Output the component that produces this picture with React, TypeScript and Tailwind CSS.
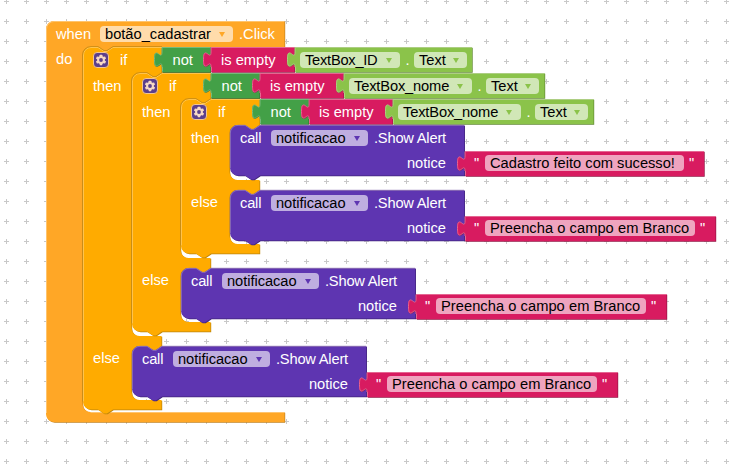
import React from "react";

const NOTCH = "l 6,4 3,0 6,-4";
const TAB = "l -6,4 -3,0 -6,-4";
const INNER = `${TAB} h -7 a 8,8 0 0,0 -8,8`;

type ShapeProps = { d: string; fill: string; dark: string; light: string; edge?: string };

function Shape({ d, fill, dark, light, edge }: ShapeProps) {
  return (
    <svg className="absolute top-0 left-0 overflow-visible" width="1" height="1" aria-hidden="true">
      <path d={d} fill={dark} transform="translate(.7 .7)" />
      <path d={d} fill={fill} />
      {edge && <path d={edge} fill="none" stroke={light} strokeWidth="1" />}
    </svg>
  );
}

function Caret({ className }: { className: string }) {
  return (
    <svg viewBox="0 0 6 5" className={`h-[5px] w-[6px] shrink-0 ${className}`}>
      <path d="M0 0h6L3 5z" fill="currentColor" />
    </svg>
  );
}

function Label({ children, className = "" }: { children: React.ReactNode; className?: string }) {
  return <span className={`block shrink-0 leading-4 whitespace-pre text-white ${className}`}>{children}</span>;
}

function Field({ text, className, textClass, caret }: { text: string; className: string; textClass: string; caret?: string }) {
  return (
    <span className={`flex h-4 shrink-0 items-center rounded-[4px] pl-[5px] leading-4 text-black ${className}`}>
      <span className={`block shrink-0 whitespace-pre ${textClass}`}>{text}</span>
      {caret && <Caret className={caret} />}
    </span>
  );
}

function Gear() {
  return (
    <svg viewBox="0 0 16 16" className="h-4 w-4 shrink-0">
      <rect x=".5" y=".5" width="15" height="15" rx="3.5" fill="#5b3f8c" stroke="#f3c590" strokeWidth="1" />
      <g fill="#f7d9c4">
        <rect x="6.7" y="2.8" width="2.6" height="10.4" rx=".4" />
        <rect x="6.7" y="2.8" width="2.6" height="10.4" rx=".4" transform="rotate(60 8 8)" />
        <rect x="6.7" y="2.8" width="2.6" height="10.4" rx=".4" transform="rotate(120 8 8)" />
        <circle cx="8" cy="8" r="3.9" />
      </g>
      <circle cx="8" cy="8" r="1.9" fill="#5b3f8c" />
    </svg>
  );
}

function WhenBlock() {
  const d = `M 0,8 a 8,8 0 0,1 8,-8 H 238.5 V 26 H 66.5 ${INNER} V 383 a 8,8 0 0,0 8,8 H 238.5 V 401 H 8 a 8,8 0 0,1 -8,-8 z`;
  return (
    <section className="absolute top-[21px] left-[46px] h-[401px] w-[239px]">
      <Shape d={d} fill="#ffa726" dark="#c4821e" light="#ffc46d" edge="M .5,392 V 8 a 7.5,7.5 0 0,1 7.5,-7.5 H 238 M 44.5,391.5 H 238" />
      <div className="relative flex pt-[5px] pl-[10px]">
        <Label className="w-[44px]">when</Label>
        <Field text="botão_cadastrar" className="w-[133px] bg-[#ffdcab]" textClass="w-[114px]" caret="text-[#ffa726]" />
        <Label className="ml-[6px]">.Click</Label>
      </div>
      <div className="relative pt-[9px] pl-[10px]">
        <Label>do</Label>
      </div>
    </section>
  );
}

type IfProps = { className: string; elseClass: string; arm: number; gap: number; lastArm: number; end: number };

function IfBlock({ className, elseClass, arm, gap, lastArm, end }: IfProps) {
  const d = `M 0,8 a 8,8 0 0,1 8,-8 H 15 ${NOTCH} H 78.5 V 26 ${INNER} V ${arm - 8} a 8,8 0 0,0 8,8 H 78.5 V ${gap} ${INNER} V ${lastArm - 8} a 8,8 0 0,0 8,8 H 78.5 V ${end} H 30 ${TAB} H 8 a 8,8 0 0,1 -8,-8 z`;
  return (
    <section className={`absolute w-[79px] ${className}`}>
      <Shape d={d} fill="#ffab00" dark="#bd850c" light="#ffc34c" edge={`M .5,${end - 8} V 8 a 7.5,7.5 0 0,1 7.5,-7.5 H 15 ${NOTCH} H 79`} />
      <svg className="absolute top-0 left-0 overflow-visible" width="1" height="1" aria-hidden="true">
        <path d={`M -.5,${end - 8} V 8 a 8.5,8.5 0 0,1 8.5,-8.5 H 15 ${NOTCH} H 79`} fill="none" stroke="#c58a17" strokeWidth=".8" />
      </svg>
      <div className="relative flex gap-[11px] pt-[5px] pl-[10px]">
        <Gear />
        <Label>if</Label>
      </div>
      <div className="relative pt-[10px] pl-[10px]">
        <Label>then</Label>
      </div>
      <div className={`relative pl-[10px] ${elseClass}`}>
        <Label>else</Label>
      </div>
    </section>
  );
}

function valuePath(w: number, h = 25) {
  return `M 0,0 H ${w} V ${h} H 0 V 20 c 0,-10 -8,8 -8,-7.5 s 8,2.5 8,-7.5 z`;
}

function valueEdge(w: number) {
  return `M .5,20 V 24.5 M 0,20 c 0,-10 -7.5,8 -7.5,-7.5 s 7.5,2.5 7.5,-7.5 V .5 H ${w}`;
}

function Condition({ className, children }: { className: string; children: React.ReactNode }) {
  return (
    <section className={`absolute flex h-[25px] ${className}`}>
      <div className="relative w-[49px]">
        <Shape d={valuePath(48.5)} fill="#43a047" dark="#2f7032" light="#78b97a" edge={valueEdge(48.5)} />
        <Label className="relative pt-[5px] pl-[10.5px]">not</Label>
      </div>
      <div className="relative w-[84px]">
        <Shape d={valuePath(83.5)} fill="#d81b60" dark="#951544" light="#e56792" edge={valueEdge(83.5)} />
        <Label className="relative pt-[5px] pl-[10px]">is empty</Label>
      </div>
      <div className="relative">{children}</div>
    </section>
  );
}

function Getter({ name, width, fieldClass, textClass }: { name: string; width: number; fieldClass: string; textClass: string }) {
  return (
    <>
      <Shape d={valuePath(width)} fill="#8bc34a" dark="#638b35" light="#adce83" edge={valueEdge(width)} />
      <div className="relative flex pt-[5px] pl-[5px]">
        <Field text={name} className={`bg-[#d1e7b7] ${fieldClass}`} textClass={textClass} caret="text-[#8bc34a]" />
        <Label className="w-[14px] pl-[5.5px]">.</Label>
        <Field text="Text" className="w-[53px] bg-[#d1e7b7]" textClass="w-[34px]" caret="text-[#8bc34a]" />
      </div>
    </>
  );
}

function CallBlock({ className, message, width, fieldClass, textClass }: { className: string; message: string; width: number; fieldClass: string; textClass: string }) {
  const d = `M 0,8 a 8,8 0 0,1 8,-8 H 15 ${NOTCH} H 234.3 V 50.5 H 30 ${TAB} H 8 a 8,8 0 0,1 -8,-8 z`;
  return (
    <section className={`absolute h-[51px] w-[235px] ${className}`}>
      <Shape d={d} fill="#5e35b1" dark="#41257b" light="#8e72b5" edge={`M .3,43 V 8 a 7.7,7.7 0 0,1 7.7,-7.7 H 15 ${NOTCH} H 234`} />
      <div className="relative flex pt-[5px] pl-[10px]">
        <Label className="w-[31px] tracking-[-0.2px]">call</Label>
        <Field text="notificacao" className="w-[97px] bg-[#bfaee0]" textClass="w-[78px] tracking-[-0.05px]" caret="text-[#5e35b1]" />
        <Label className="ml-[6px] tracking-[-0.2px]">.Show Alert</Label>
      </div>
      <div className="relative flex justify-end pt-[9px] pr-[19px]">
        <Label>notice</Label>
      </div>
      <div className="absolute top-[26px] left-[235px]">
        <Shape d={valuePath(width)} fill="#d81b60" dark="#951544" light="#e56792" edge={valueEdge(width)} />
        <div className="relative flex pt-[4px] pl-[9px]">
          <Label className="w-[11px]">"</Label>
          <Field text={message} className={`bg-[#efa4bf] ${fieldClass}`} textClass={textClass} />
          <Label className="pl-[5px]">"</Label>
        </div>
      </div>
    </section>
  );
}

function Grid() {
  return (
    <svg className="absolute inset-0 h-full w-full" aria-hidden="true">
      <defs>
        <pattern id="grid" x="-4" y="-9" width="20" height="20" patternUnits="userSpaceOnUse">
          <path d="M 8,10.5 h 5 M 10.5,8 v 5" stroke="#c8c8c8" strokeWidth="1" />
        </pattern>
      </defs>
      <rect width="100%" height="100%" fill="url(#grid)" />
    </svg>
  );
}

const branco = {
  message: "Preencha o campo em Branco",
  width: 250.5,
  fieldClass: "w-[210px]",
  textClass: "tracking-[0.05px]",
};

export default function App() {
  return (
    <main className="relative h-[469px] w-[742px] overflow-hidden bg-white font-['Liberation_Sans',Arial,sans-serif] text-[14.67px]">
      <Grid />
      <WhenBlock />
      <IfBlock className="top-[47px] left-[83px]" elseClass="pt-[256px]" arm={289} gap={299} lastArm={353} end={362.5} />
      <IfBlock className="top-[73px] left-[132px]" elseClass="pt-[152px]" arm={185} gap={195} lastArm={249} end={258.5} />
      <IfBlock className="top-[99px] left-[181px]" elseClass="pt-[48px]" arm={81} gap={91} lastArm={145} end={154.5} />

      <Condition className="top-[47px] left-[162px]">
        <Getter name="TextBox_ID" width={177} fieldClass="w-[100px]" textClass="w-[81px] tracking-[-0.25px]" />
      </Condition>
      <Condition className="top-[73px] left-[211px]">
        <Getter name="TextBox_nome" width={200.5} fieldClass="w-[123px]" textClass="w-[103px] tracking-[-0.15px]" />
      </Condition>
      <Condition className="top-[99px] left-[260px]">
        <Getter name="TextBox_nome" width={200.5} fieldClass="w-[123px]" textClass="w-[103px] tracking-[-0.15px]" />
      </Condition>

      <CallBlock
        className="top-[125px] left-[230px]"
        message="Cadastro feito com sucesso!"
        width={239}
        fieldClass="w-[199px]"
        textClass=""
      />
      <CallBlock className="top-[190px] left-[230px]" {...branco} />
      <CallBlock className="top-[268px] left-[181px]" {...branco} />
      <CallBlock className="top-[346px] left-[132px]" {...branco} />
    </main>
  );
}
